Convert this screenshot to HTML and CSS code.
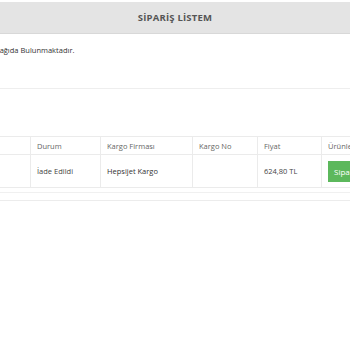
FILE: index.html
```html
<!DOCTYPE html>
<html lang="tr">
<head>
  <meta charset="UTF-8">
  <meta name="viewport" content="width=device-width, initial-scale=1.0">
  <title>Sipariş Listem</title>
  <link rel="stylesheet" href="styles.css">
</head>
<body>

<header class="title-bar">
  <h1>SİPARİŞ LİSTEM</h1>
</header>

<div class="intro">
  <p>Siparişleriniz Aşağıda Bulunmaktadır.</p>
</div>

<section class="orders">
  <table class="order-table">
    <colgroup>
      <col class="c-no">
      <col class="c-status">
      <col class="c-cargo">
      <col class="c-track">
      <col class="c-price">
      <col class="c-items">
    </colgroup>
    <thead>
      <tr>
        <th>Sipariş No</th>
        <th>Durum</th>
        <th>Kargo Firması</th>
        <th>Kargo No</th>
        <th>Fiyat</th>
        <th>Ürünler</th>
      </tr>
    </thead>
    <tbody>
      <tr>
        <td>1045872</td>
        <td>İade Edildi</td>
        <td class="dark">Hepsijet Kargo</td>
        <td></td>
        <td>624,80 TL</td>
        <td><button class="btn-detail">Sipariş Detayı</button></td>
      </tr>
    </tbody>
  </table>
  <div class="table-foot"></div>
</section>

</body>
</html>
```

FILE: styles.css
```css
/* General Styles */
body {
  margin: 0;
  padding: 0;
  font-family: "Open Sans", Arial, sans-serif;
  color: #444;
  background-color: #fff;
  overflow: hidden;
}
.title-bar {
  margin-top: 2px;
  height: 31px;
  background-color: #e4e4e4;
  border-bottom: 1px solid #d8d8d8;
  text-align: center;
}
.title-bar h1 {
  margin: 0;
  padding-left: 0;
  font-size: 9.5px;
  line-height: 31px;
  font-weight: 700;
  color: #555;
  letter-spacing: 0.2px;
}
.intro {
  height: 54px;
  border-bottom: 1px solid #eee;
  overflow: hidden;
}
.intro p {
  margin: 11px 0 0 -55px;
  font-size: 7.5px;
  color: #333;
  white-space: nowrap;
}
.orders {
  padding-top: 47px;
}
.order-table {
  margin-left: -50px;
  width: 451px;
  table-layout: fixed;
  border-collapse: collapse;
  font-size: 7.5px;
}
.c-no { width: 80px; }
.c-status { width: 70px; }
.c-cargo { width: 92px; }
.c-track { width: 65px; }
.c-price { width: 64px; }
.c-items { width: 80px; }
.order-table th,
.order-table td {
  border: 1px solid #ebebeb;
  padding: 0 6px;
  text-align: left;
  white-space: nowrap;
  overflow: hidden;
}
.order-table th {
  height: 17px;
  font-weight: 400;
  color: #666;
}
.order-table td {
  height: 32px;
  color: #444;
}
.order-table td.dark {
  color: #333;
}
.btn-detail {
  height: 21px;
  padding: 0 6px;
  border: none;
  background-color: #5cb85c;
  color: #fff;
  font-family: inherit;
  font-size: 8px;
}
.table-foot {
  margin-top: 4px;
  height: 7px;
  border-top: 1px solid #f0f0f0;
  border-bottom: 1px solid #ececec;
}
```
